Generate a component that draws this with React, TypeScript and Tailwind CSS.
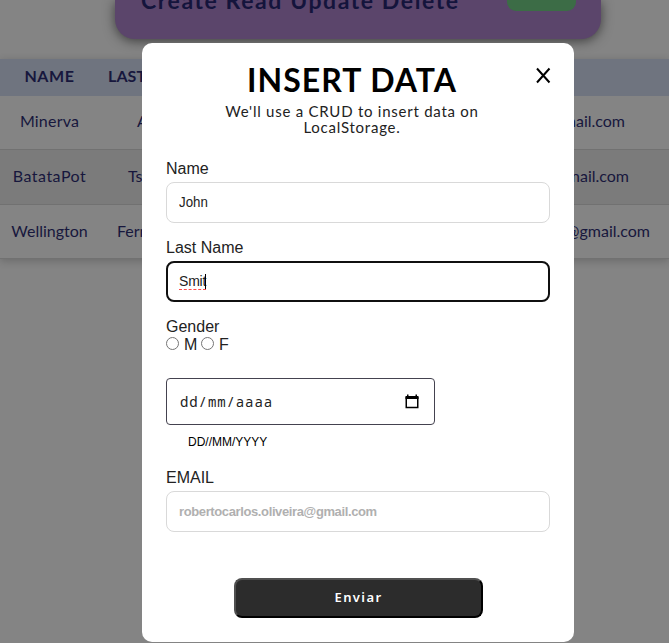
import React from "react";

const geo = "font-['Lato','Open_Sans',sans-serif]";

const rows = [
  { name: "Minerva", nameCls: "tracking-[0.2px]", last: "A", lastPad: "pl-[38px]", email: "@gmail.com", pad: "pr-[44px]", bg: "bg-[#848484]", h: "h-[54px] pb-[4px]" },
  { name: "BatataPot", nameCls: "tracking-[0.5px]", last: "Tsu", lastPad: "pl-[29px]", email: "@gmail.com", pad: "pr-[40px]", bg: "bg-[#7b7b7b]", h: "h-[55px] pb-[2px]" },
  { name: "Wellington", nameCls: "", last: "Fern", lastPad: "pl-[18px]", email: "@gmail.com", pad: "pr-[19px]", bg: "bg-[#848484]", h: "h-[54px] pb-[2px]" },
];

function Banner() {
  return (
    <header className={`ml-[115px] flex h-[39px] w-[486px] justify-between rounded-b-[20px] bg-[#5b456b] pr-[25px] pl-[26px] shadow-[0_2px_12px_rgba(0,0,0,0.55)] ${geo}`}>
      <h1 className="-mt-[14px] text-[23px] leading-[28px] font-bold tracking-[1.58px] whitespace-nowrap text-[#14143c]">
        Create Read Update Delete
      </h1>
      <div className="h-[11px] w-[69px] rounded-b-[9px] bg-[#3c6c46]" />
    </header>
  );
}

function People() {
  return (
    <section className={`mt-5 text-[16px] text-[#17173d] shadow-[0_2px_8px_rgba(0,0,0,0.2)] ${geo}`}>
      <div className="flex h-[37px] items-center bg-[#6f747f] pb-[3px] font-bold">
        <span className="w-[99px] text-center tracking-[0.6px]">NAME</span>
        <span className="pl-[9px] tracking-[0.1px]">LAST</span>
      </div>
      {rows.map((r) => (
        <div key={r.name} className={`flex items-center border-b border-[#717171] ${r.bg} ${r.h}`}>
          <span className={`w-[99px] text-center ${r.nameCls}`}>{r.name}</span>
          <span className={r.lastPad}>{r.last}</span>
          <span className={`ml-auto ${r.pad}`}>{r.email}</span>
        </div>
      ))}
    </section>
  );
}

function Field({ label, children }: { label: string; children: React.ReactNode }) {
  return (
    <div className="flex h-[63px] flex-col">
      <label className="h-[22px] text-[16px] leading-[18px] text-[#222]">{label}</label>
      {children}
    </div>
  );
}

const box = "flex h-[41px] w-[384px] shrink-0 items-center rounded-[8px] text-[14px]";

function Dialog() {
  return (
    <main className="absolute top-[43px] left-[142px] flex h-[599px] w-[432px] flex-col rounded-[10px] bg-white px-6 font-['Liberation_Sans',Arial,sans-serif]">
      <button className="absolute top-[24px] right-[23px] h-[17px] w-[16px]" aria-label="Close">
        <svg width="16" height="17" viewBox="0 0 16 17" fill="none" stroke="#000" strokeWidth="2">
          <path d="M2 1.5L14.5 15.5M14.5 1.5L2 15.5" />
        </svg>
      </button>
      <div className={`h-[117px] pt-[19px] text-center ${geo}`}>
        <h2 className="mr-[12px] text-[32px] leading-[36px] font-bold tracking-[1px] text-black">INSERT DATA</h2>
        <p className="mt-[5px] mr-[12px] text-[15px] leading-4 tracking-[0.75px] text-[#222]">
          We'll use a CRUD to insert data on
          <br />
          LocalStorage.
        </p>
      </div>
      <Field label="Name">
        <div className={`${box} border border-[#d9d9d9] px-3 text-[#222]`}>
          <span className="inline-block origin-left scale-x-[0.95]">John</span>
        </div>
      </Field>
      <div className="h-[16px]" />
      <Field label="Last Name">
        <div className={`${box} border-2 border-[#101010] px-[11px] text-[#222]`}>
          <span className="-mr-px h-[16px] border-b border-dashed border-[#ff4b4b] leading-[15px] tracking-[-0.2px]">Smit</span>
          <span className="h-[15px] w-px bg-black" />
        </div>
      </Field>
      <div className="mt-[16px] h-[59px] text-[16px] leading-[18px] text-[#222]">
        <div>Gender</div>
        <div className="flex items-center">
          <span className="-mt-[3px] h-[13px] w-[13px] rounded-full border border-[#767676]" />
          <span className="w-[22px] pl-[5px]">M</span>
          <span className="-mt-[3px] h-[13px] w-[13px] rounded-full border border-[#767676]" />
          <span className="pl-[5px]">F</span>
        </div>
      </div>
      <div className="mt-[1px] flex h-[47px] w-[269px] shrink-0 items-center justify-between rounded-[4px] border border-[#44424f] pr-[15px] pl-[13px]">
        <span className="font-['Noto_Sans_Mono','DejaVu_Sans_Mono',monospace] text-[14px] tracking-[0.9px] text-[#222]">dd/mm/aaaa</span>
        <svg width="14" height="15" viewBox="0 0 14 15" fill="none">
          <path d="M1.25 3v10.5h11.5V3" stroke="#000" strokeWidth="1.5" />
          <path d="M.5 2h13v3H.5zM2 .5h1.5V3H2zM10.5.5H12V3h-1.5z" fill="#000" />
        </svg>
      </div>
      <p className="mt-[9px] h-[34px] pl-[22px] text-[12px] leading-[16px] text-black">DD//MM/YYYY</p>
      <div className="mt-[1px]">
        <Field label="EMAIL">
          <div className={`${box} border border-[#d9d9d9] px-3 text-[#b0b0b0]`}>
            <span className="text-[13px] font-bold tracking-[-0.38px]">robertocarlos.oliveira@gmail.com</span>
          </div>
        </Field>
      </div>
      <button className="mt-[46px] ml-[68px] h-[40px] w-[249px] shrink-0 rounded-[8px] border-2 border-t-[#505050] border-r-black border-b-black border-l-[#505050] bg-[#2c2c2c] font-['Noto_Sans',sans-serif] text-[13px] font-semibold tracking-[1.4px] text-white">
        Enviar
      </button>
    </main>
  );
}

export default function App() {
  return (
    <div className="relative h-[643px] w-[669px] overflow-hidden bg-[#848484]">
      <Banner />
      <People />
      <Dialog />
    </div>
  );
}
